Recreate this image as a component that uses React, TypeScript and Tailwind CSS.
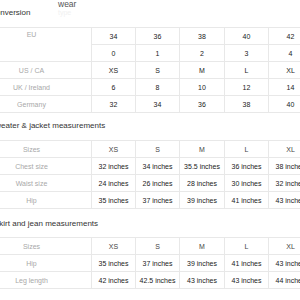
const font = { fontFamily: '"Liberation Sans", Arial, sans-serif' };

type Row = { label: string; values: string[]; head?: boolean };

const conversion: Row[] = [
  { label: "0", values: ["0", "1", "2", "3", "4"] },
  { label: "US / CA", values: ["XS", "S", "M", "L", "XL"] },
  { label: "UK / Ireland", values: ["6", "8", "10", "12", "14"] },
  { label: "Germany", values: ["32", "34", "36", "38", "40"] },
];

const sweater: Row[] = [
  { label: "Sizes", values: ["XS", "S", "M", "L", "XL"], head: true },
  { label: "Chest size", values: ["32 inches", "34 inches", "35.5 inches", "36 inches", "38 inches"] },
  { label: "Waist size", values: ["24 inches", "26 inches", "28 inches", "30 inches", "32 inches"] },
  { label: "Hip", values: ["35 inches", "37 inches", "39 inches", "41 inches", "43 inches"] },
];

const skirt: Row[] = [
  { label: "Sizes", values: ["XS", "S", "M", "L", "XL"], head: true },
  { label: "Hip", values: ["35 inches", "37 inches", "39 inches", "41 inches", "43 inches"] },
  { label: "Leg length", values: ["42 inches", "42.5 inches", "43 inches", "43 inches", "44 inches"] },
];

const cell = "flex items-center justify-center border-b border-r border-[#e8e8e8] whitespace-nowrap";
const grid = "grid grid-cols-[120px_44px_44px_45px_44px_44px] auto-rows-[17px] border-t border-[#e8e8e8] text-[7px] leading-[9px]";

function Cells({ row }: { row: Row }) {
  return (
    <>
      <div className={`${cell} text-[#a8a8a8]`}>{row.label}</div>
      {row.values.map((v, i) => (
        <div key={i} className={`${cell} ${row.head ? "text-[#444]" : "text-[#222]"}`}>
          {v}
        </div>
      ))}
    </>
  );
}

function Table({ rows }: { rows: Row[] }) {
  return (
    <div className={grid}>
      {rows.map((r) => (
        <Cells key={r.label} row={r} />
      ))}
    </div>
  );
}

export default function App() {
  return (
    <div className="h-[300px] w-[300px] overflow-hidden bg-white" style={font}>
      <div className="ml-[-28px] w-[400px]">
        <div className="relative h-[8px]">
          <p className="absolute left-[86px] top-0 text-[8.5px] leading-[8px] text-[#555]">wear</p>
          <p className="absolute left-[86px] top-[9px] text-[7px] leading-[8px] text-[#f1f1f1]">type</p>
        </div>
        <h2 className="pl-[2px] text-[8px] leading-[10px] text-[#333]">Size conversion</h2>
        <div className="mt-[9px]">
          <div className={grid}>
            <div className={`${cell} row-span-2 items-start pt-[2px] text-[#a8a8a8]`}>EU</div>
            {["34", "36", "38", "40", "42"].map((v) => (
              <div key={v} className={`${cell} text-[#222]`}>{v}</div>
            ))}
            {conversion[0].values.map((v) => (
              <div key={v} className={`${cell} text-[#222]`}>{v}</div>
            ))}
            {conversion.slice(1).map((r) => (
              <Cells key={r.label} row={r} />
            ))}
          </div>
        </div>

        <h2 className="mt-[8px] pl-[18px] text-[8px] leading-[10px] text-[#333]">Sweater &amp; jacket measurements</h2>
        <div className="mt-[9px]">
          <Table rows={sweater} />
        </div>

        <h2 className="mt-[10px] pl-[22px] text-[8px] leading-[10px] text-[#333]">Skirt and jean measurements</h2>
        <div className="mt-[8px]">
          <Table rows={skirt} />
        </div>
      </div>
    </div>
  );
}
